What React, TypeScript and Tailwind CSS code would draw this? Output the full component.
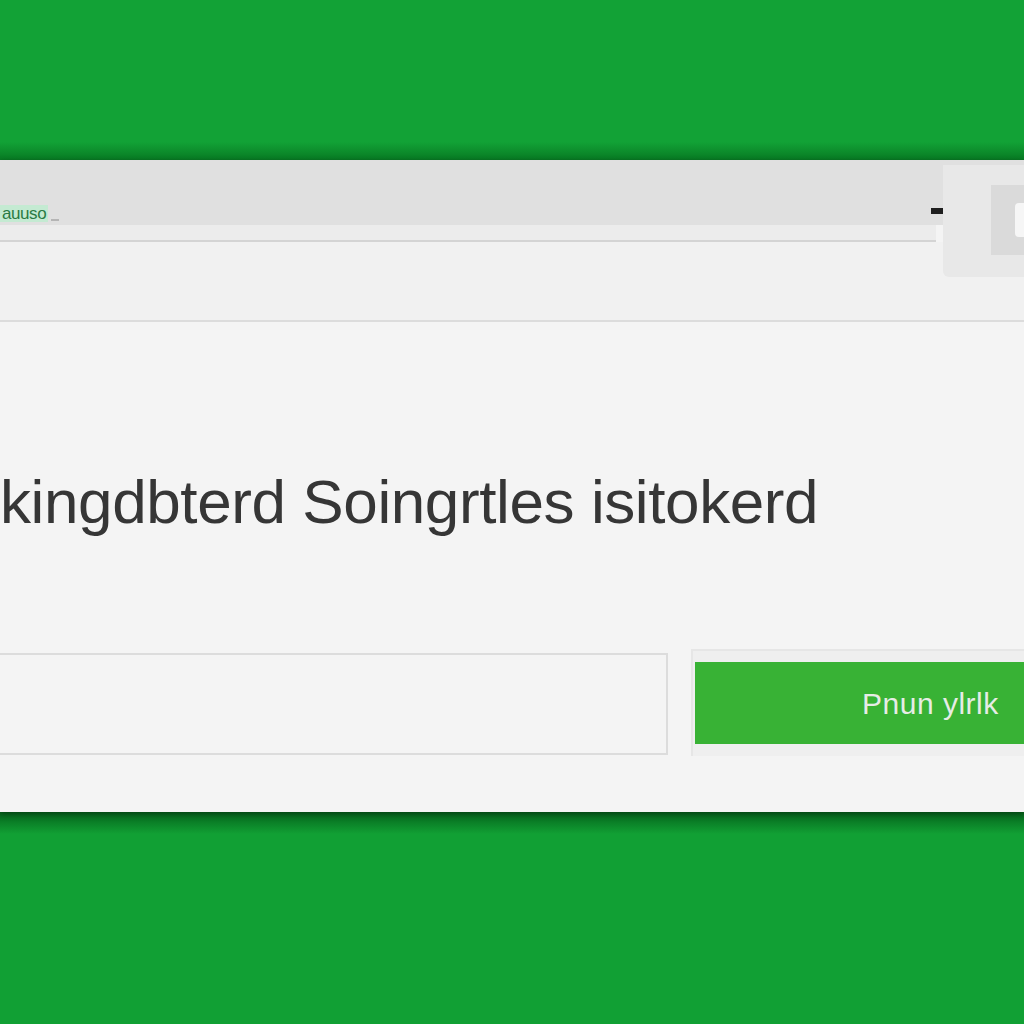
export default function App() {
  return (
    <div className="w-[1024px] h-[1024px] overflow-hidden flex flex-col bg-[#11a034] font-['Liberation_Sans',Arial,sans-serif]">
      <div className="h-[160px] shrink-0 flex flex-col bg-[#12a236]">
        <div className="flex-1" />
        <div className="h-[18px] bg-gradient-to-b from-[#12a236] to-[#087a23]" />
      </div>

      <div className="relative h-[652px] shrink-0 flex flex-col bg-[#f4f4f4] shadow-[0_2px_6px_rgba(0,0,0,0.35)]">
        {/* title bar */}
        <div className="h-[65px] shrink-0 bg-[#e0e0e0] flex items-end pb-[3px]">
          <span className="px-[2px] bg-[#c4ead2] text-[#2a7a44] text-[17px] leading-[17px] tracking-tight">auuso</span>
          <span className="ml-[3px] mb-[1px] w-[8px] h-[2px] bg-[#b5b5b5]" />
        </div>
        <div className="w-[936px] h-[17px] shrink-0 bg-[#ececec] border-b-2 border-[#d4d4d4]" />
        <div className="h-[80px] shrink-0 bg-[#f1f1f1] border-b-2 border-[#dcdcdc]" />

        {/* window controls, drawn over the bars */}
        <div className="absolute left-[931px] top-[48px] w-[12px] h-[6px] bg-[#1e1e1e]" />
        <div className="absolute left-[943px] top-[5px] w-[90px] h-[112px] bg-[#e8e8e8] rounded-bl-[6px] flex justify-end pt-[20px]">
          <div className="w-[42px] h-[70px] bg-[#dadada] flex items-center justify-end">
            <div className="w-[18px] h-[34px] bg-[#f6f6f6] rounded-l-[4px]" />
          </div>
        </div>

        <div className="flex-1 flex flex-col pt-[149px]">
          <h1 className="text-[62px] leading-[62px] text-[#363636] whitespace-nowrap tracking-[-0.4px]">
            kingdbterd Soingrtles isitokerd
          </h1>
          <div className="mt-[116px] flex items-start">
            <div className="mt-[4px] w-[668px] h-[102px] bg-[#f4f4f4] border-2 border-l-0 border-[#dcdcdc]" />
            <div className="ml-[23px] flex-1 h-[107px] bg-[#efefef] border-t-2 border-l-2 border-[#e6e6e6] pl-[2px] pt-[11px]">
              <button className="w-full h-[82px] bg-[#38b235] text-left pl-[167px] text-[30px] text-[#e6ece6] whitespace-nowrap tracking-[0.5px]">
                Pnun ylrlk
              </button>
            </div>
          </div>
        </div>
      </div>

      <div className="flex-1 flex flex-col bg-[#11a034]">
        <div className="h-[22px] bg-gradient-to-b from-[#06641c] to-[#11a034]" />
      </div>
    </div>
  );
}
